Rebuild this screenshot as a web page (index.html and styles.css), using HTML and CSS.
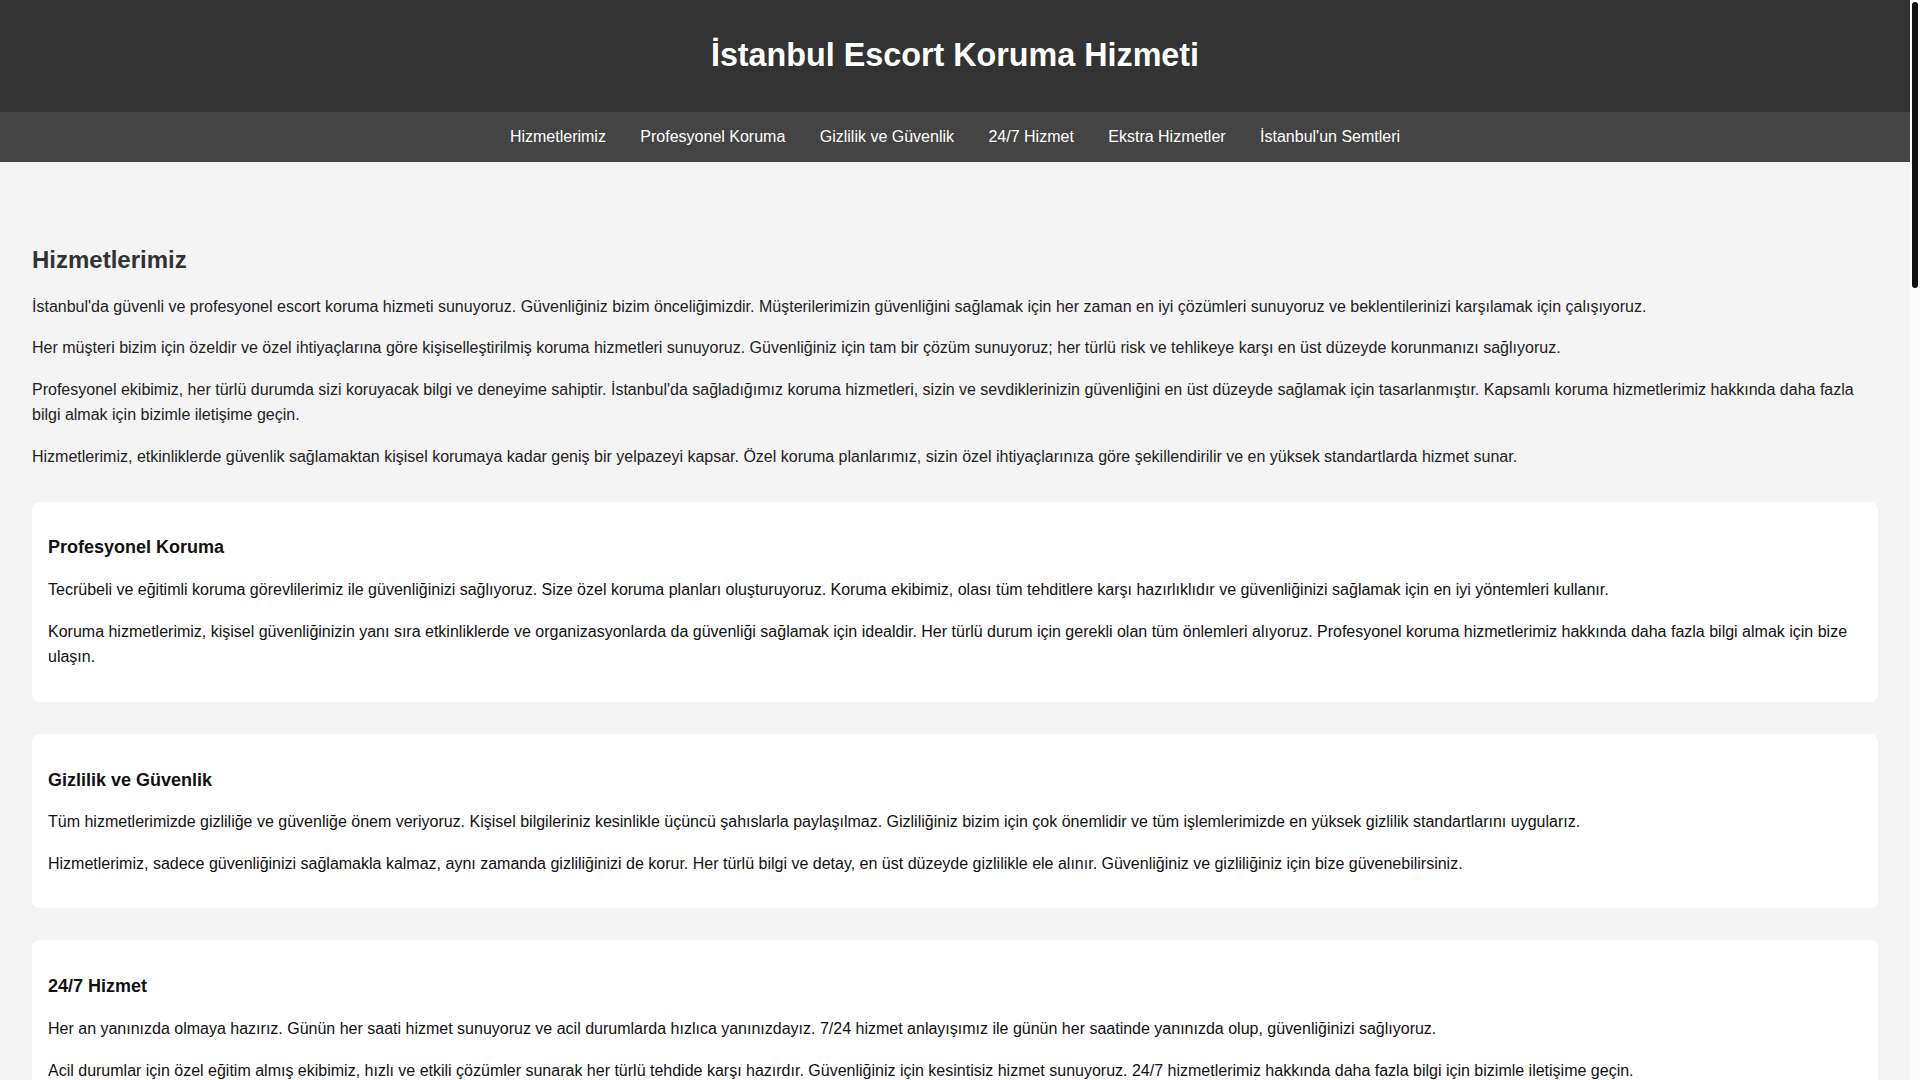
FILE: index.html
```html
<!DOCTYPE html>
<html lang="tr">
<head>
<meta charset="utf-8">
<title>İstanbul Escort Koruma Hizmeti</title>
<link rel="stylesheet" href="styles.css">
</head>
<body>
<header class="site-header">
  <h1 class="site-title">İstanbul Escort Koruma Hizmeti</h1>
</header>
<nav class="site-nav">
  <ul class="nav-list">
    <li><a href="#hizmetlerimiz">Hizmetlerimiz</a></li>
    <li><a href="#profesyonel">Profesyonel Koruma</a></li>
    <li><a href="#gizlilik">Gizlilik ve Güvenlik</a></li>
    <li><a href="#hizmet247">24/7 Hizmet</a></li>
    <li><a href="#ekstra">Ekstra Hizmetler</a></li>
    <li><a href="#semtler">İstanbul'un Semtleri</a></li>
  </ul>
</nav>
<main class="content">
  <section class="intro" id="hizmetlerimiz">
    <h2>Hizmetlerimiz</h2>
    <p>İstanbul'da güvenli ve profesyonel escort koruma hizmeti sunuyoruz. Güvenliğiniz bizim önceliğimizdir. Müşterilerimizin güvenliğini sağlamak için her zaman en iyi çözümleri sunuyoruz ve beklentilerinizi karşılamak için çalışıyoruz.</p>
    <p>Her müşteri bizim için özeldir ve özel ihtiyaçlarına göre kişiselleştirilmiş koruma hizmetleri sunuyoruz. Güvenliğiniz için tam bir çözüm sunuyoruz; her türlü risk ve tehlikeye karşı en üst düzeyde korunmanızı sağlıyoruz.</p>
    <p>Profesyonel ekibimiz, her türlü durumda sizi koruyacak bilgi ve deneyime sahiptir. İstanbul'da sağladığımız koruma hizmetleri, sizin ve sevdiklerinizin güvenliğini en üst düzeyde sağlamak için tasarlanmıştır. Kapsamlı koruma hizmetlerimiz hakkında daha fazla bilgi almak için bizimle iletişime geçin.</p>
    <p>Hizmetlerimiz, etkinliklerde güvenlik sağlamaktan kişisel korumaya kadar geniş bir yelpazeyi kapsar. Özel koruma planlarımız, sizin özel ihtiyaçlarınıza göre şekillendirilir ve en yüksek standartlarda hizmet sunar.</p>
  </section>

  <section class="card" id="profesyonel">
    <h3>Profesyonel Koruma</h3>
    <p>Tecrübeli ve eğitimli koruma görevlilerimiz ile güvenliğinizi sağlıyoruz. Size özel koruma planları oluşturuyoruz. Koruma ekibimiz, olası tüm tehditlere karşı hazırlıklıdır ve güvenliğinizi sağlamak için en iyi yöntemleri kullanır.</p>
    <p>Koruma hizmetlerimiz, kişisel güvenliğinizin yanı sıra etkinliklerde ve organizasyonlarda da güvenliği sağlamak için idealdir. Her türlü durum için gerekli olan tüm önlemleri alıyoruz. Profesyonel koruma hizmetlerimiz hakkında daha fazla bilgi almak için bize ulaşın.</p>
  </section>

  <section class="card" id="gizlilik">
    <h3>Gizlilik ve Güvenlik</h3>
    <p>Tüm hizmetlerimizde gizliliğe ve güvenliğe önem veriyoruz. Kişisel bilgileriniz kesinlikle üçüncü şahıslarla paylaşılmaz. Gizliliğiniz bizim için çok önemlidir ve tüm işlemlerimizde en yüksek gizlilik standartlarını uygularız.</p>
    <p>Hizmetlerimiz, sadece güvenliğinizi sağlamakla kalmaz, aynı zamanda gizliliğinizi de korur. Her türlü bilgi ve detay, en üst düzeyde gizlilikle ele alınır. Güvenliğiniz ve gizliliğiniz için bize güvenebilirsiniz.</p>
  </section>

  <section class="card" id="hizmet247">
    <h3>24/7 Hizmet</h3>
    <p>Her an yanınızda olmaya hazırız. Günün her saati hizmet sunuyoruz ve acil durumlarda hızlıca yanınızdayız. 7/24 hizmet anlayışımız ile günün her saatinde yanınızda olup, güvenliğinizi sağlıyoruz.</p>
    <p>Acil durumlar için özel eğitim almış ekibimiz, hızlı ve etkili çözümler sunarak her türlü tehdide karşı hazırdır. Güvenliğiniz için kesintisiz hizmet sunuyoruz. 24/7 hizmetlerimiz hakkında daha fazla bilgi için bizimle iletişime geçin.</p>
  </section>

  <section class="card" id="ekstra">
    <h3>Ekstra Hizmetler</h3>
    <p>Koruma hizmetlerimizin yanı sıra, güvenli ulaşım, özel şoför ve araç eskortu gibi ek hizmetler de sunuyoruz. Her türlü ihtiyacınız için yanınızdayız.</p>
    <p>Etkinlik güvenliği, konut ve iş yeri güvenliği ile risk analizi hizmetlerimizle, size en kapsamlı güvenlik çözümlerini sağlıyoruz.</p>
    <p>Ekstra hizmetlerimiz hakkında detaylı bilgi almak ve size özel bir teklif oluşturmak için bizimle iletişime geçebilirsiniz.</p>
  </section>

  <section class="card" id="semtler">
    <h3>İstanbul'un Semtleri</h3>
    <p>İstanbul'un tüm semtlerinde koruma hizmeti sunuyoruz. Hizmet verdiğimiz başlıca bölgeler şunlardır:</p>
    <ul class="district-list">
      <li>Adalar</li><li>Arnavutköy</li><li>Ataşehir</li><li>Avcılar</li><li>Bağcılar</li><li>Bahçelievler</li><li>Bakırköy</li><li>Başakşehir</li><li>Bayrampaşa</li><li>Beşiktaş</li><li>Beykoz</li><li>Beylikdüzü</li><li>Beyoğlu</li><li>Büyükçekmece</li><li>Çatalca</li><li>Çekmeköy</li><li>Esenler</li><li>Esenyurt</li><li>Eyüpsultan</li><li>Fatih</li><li>Gaziosmanpaşa</li><li>Güngören</li><li>Kadıköy</li><li>Kağıthane</li><li>Kartal</li><li>Küçükçekmece</li><li>Maltepe</li><li>Pendik</li><li>Sancaktepe</li><li>Sarıyer</li><li>Silivri</li><li>Sultanbeyli</li><li>Sultangazi</li><li>Şile</li><li>Şişli</li><li>Tuzla</li><li>Ümraniye</li><li>Üsküdar</li><li>Zeytinburnu</li>
    </ul>
    <p>Bulunduğunuz semtte hizmet almak için bizimle iletişime geçebilirsiniz.</p>
  </section>

  <section class="card">
    <h3>Beşiktaş</h3>
    <p>Beşiktaş'ta iş toplantıları, etkinlikler ve özel davetler için profesyonel koruma hizmeti sunuyoruz. Ekibimiz bölgeyi çok iyi tanır ve güvenliğinizi en üst düzeyde sağlar.</p>
    <p>Beşiktaş'taki koruma hizmetlerimiz hakkında bilgi almak için bize ulaşın.</p>
  </section>

  <section class="card">
    <h3>Kadıköy</h3>
    <p>Kadıköy'de kişisel koruma ve etkinlik güvenliği hizmetlerimizle yanınızdayız. Anadolu yakasının her noktasında hızlı ve güvenilir hizmet veriyoruz.</p>
    <p>Kadıköy'deki koruma hizmetlerimiz hakkında bilgi almak için bize ulaşın.</p>
  </section>

  <section class="card">
    <h3>Şişli</h3>
    <p>Şişli'de iş dünyasına yönelik koruma hizmetlerimizle, toplantılarınızda ve seyahatlerinizde güvenliğinizi sağlıyoruz.</p>
    <p>Şişli'deki koruma hizmetlerimiz hakkında bilgi almak için bize ulaşın.</p>
  </section>

  <section class="card">
    <h3>Beyoğlu</h3>
    <p>Beyoğlu'nun yoğun ve hareketli ortamında, gece etkinliklerinde ve özel davetlerde güvenliğiniz için profesyonel koruma sağlıyoruz.</p>
    <p>Beyoğlu'ndaki koruma hizmetlerimiz hakkında bilgi almak için bize ulaşın.</p>
  </section>

  <section class="card">
    <h3>Bakırköy</h3>
    <p>Bakırköy'de havalimanı transferleri ve şehir içi ulaşım sırasında güvenli eskort hizmeti sunuyoruz.</p>
    <p>Bakırköy'deki koruma hizmetlerimiz hakkında bilgi almak için bize ulaşın.</p>
  </section>

  <section class="card">
    <h3>Sarıyer</h3>
    <p>Sarıyer'de konut güvenliği ve kişisel koruma hizmetlerimizle, sizin ve ailenizin huzurunu koruyoruz.</p>
    <p>Sarıyer'deki koruma hizmetlerimiz hakkında bilgi almak için bize ulaşın.</p>
  </section>

  <section class="card">
    <h3>Üsküdar</h3>
    <p>Üsküdar'da etkinlik güvenliği ve kişisel koruma alanında deneyimli ekibimizle hizmetinizdeyiz.</p>
    <p>Üsküdar'daki koruma hizmetlerimiz hakkında bilgi almak için bize ulaşın.</p>
  </section>
</main>
<footer class="site-footer">
  <p>&copy; 2024 İstanbul Escort Koruma Hizmeti. Tüm hakları saklıdır.</p>
</footer>
<div class="scrollbar" aria-hidden="true"><div class="scrollbar-thumb"></div></div>
</body>
</html>
```

FILE: styles.css
```css
html {
  background: #f4f4f4;
}

body {
  margin: 0;
  margin-right: 10px;
  background: #f4f4f4;
  color: #222;
  font-family: "Liberation Sans", Arial, sans-serif;
  font-size: 16px;
}

.scrollbar {
  position: fixed;
  top: 0;
  right: 0;
  width: 10px;
  height: 100vh;
  background: #fbfbfb;
}

.scrollbar-thumb {
  position: absolute;
  top: 2px;
  left: 2px;
  width: 6px;
  height: 286px;
  background: #111;
  border-radius: 3px;
}

.site-header {
  background: #333;
  color: #fff;
  padding: 16px 0;
  text-align: center;
}

.site-title {
  margin: 21.44px 0;
  font-size: 32.3px;
  line-height: 36.8px;
  font-weight: bold;
}

.site-nav {
  background: #444;
}

.nav-list {
  list-style: none;
  margin: 0;
  padding: 12px 0;
  display: flex;
  justify-content: center;
  gap: 34.45px;
  line-height: 26px;
}

.nav-list a {
  color: #fff;
  text-decoration: none;
}

.content {
  padding: 32px;
}

.intro {
  padding-top: 32px;
  margin-bottom: 32px;
}

.intro h2 {
  margin: 20px 0;
  font-size: 24px;
  line-height: normal;
  color: #333;
}

p {
  margin: 16px 0;
  line-height: 1.6;
}

.card {
  background: #fff;
  border-radius: 8px;
  padding: 16px;
  margin-bottom: 32px;
  color: #111;
}

.card h3 {
  margin: 19.72px 0 18.22px;
  font-size: 18px;
  line-height: 21.5px;
}

.district-list {
  margin: 16px 0;
  padding-left: 40px;
  line-height: 1.6;
}

.site-footer {
  background: #333;
  color: #fff;
  text-align: center;
  padding: 4px 0;
}
```
